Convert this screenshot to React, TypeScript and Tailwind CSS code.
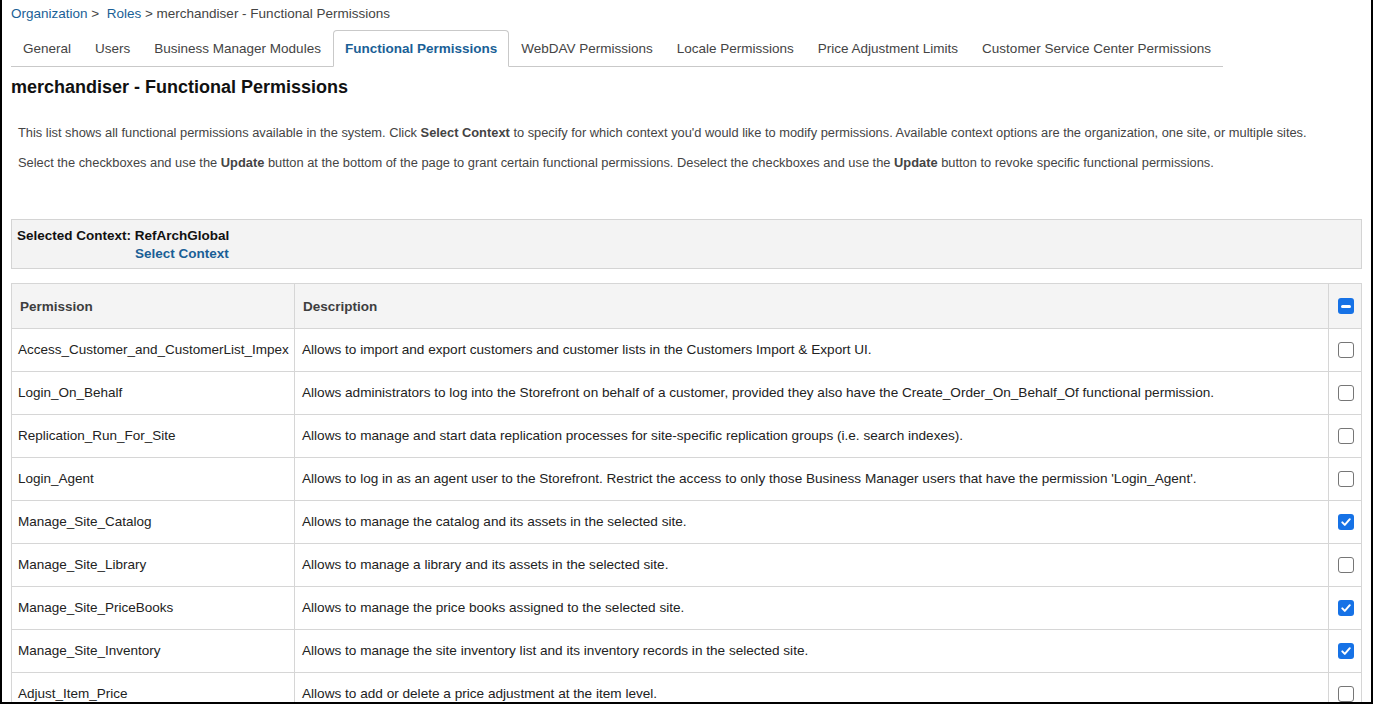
import React from "react";

type Row = { name: string; desc: string; checked: boolean };

const rows: Row[] = [
  { name: "Access_Customer_and_CustomerList_Impex", desc: "Allows to import and export customers and customer lists in the Customers Import & Export UI.", checked: false },
  { name: "Login_On_Behalf", desc: "Allows administrators to log into the Storefront on behalf of a customer, provided they also have the Create_Order_On_Behalf_Of functional permission.", checked: false },
  { name: "Replication_Run_For_Site", desc: "Allows to manage and start data replication processes for site-specific replication groups (i.e. search indexes).", checked: false },
  { name: "Login_Agent", desc: "Allows to log in as an agent user to the Storefront. Restrict the access to only those Business Manager users that have the permission 'Login_Agent'.", checked: false },
  { name: "Manage_Site_Catalog", desc: "Allows to manage the catalog and its assets in the selected site.", checked: true },
  { name: "Manage_Site_Library", desc: "Allows to manage a library and its assets in the selected site.", checked: false },
  { name: "Manage_Site_PriceBooks", desc: "Allows to manage the price books assigned to the selected site.", checked: true },
  { name: "Manage_Site_Inventory", desc: "Allows to manage the site inventory list and its inventory records in the selected site.", checked: true },
  { name: "Adjust_Item_Price", desc: "Allows to add or delete a price adjustment at the item level.", checked: false },
];

const tabs = [
  "General",
  "Users",
  "Business Manager Modules",
  "Functional Permissions",
  "WebDAV Permissions",
  "Locale Permissions",
  "Price Adjustment Limits",
  "Customer Service Center Permissions",
];

function Box({ state }: { state: "on" | "off" | "mixed" }) {
  if (state === "off") {
    return <span className="inline-block w-[16px] h-[16px] rounded-[3px] border border-[#767676] bg-white align-middle" />;
  }
  return (
    <span className="inline-flex w-[16px] h-[16px] rounded-[3px] bg-[#1672e6] items-center justify-center align-middle">
      {state === "on" ? (
        <svg width="12" height="12" viewBox="0 0 12 12" fill="none">
          <path d="M2.3 6.4 4.8 8.9 9.8 3.2" stroke="white" strokeWidth="2" strokeLinecap="round" strokeLinejoin="round" />
        </svg>
      ) : (
        <span className="block w-[10px] h-[2.5px] rounded-full bg-white" />
      )}
    </span>
  );
}

export default function App() {
  return (
    <div className="w-[1373px] h-[704px] overflow-hidden bg-white border-x-2 border-b-2 border-black font-['Liberation_Sans',Arial,sans-serif] text-[13.5px] text-[#222]">
      <div className="pl-[9px] pr-[9px]">
        {/* breadcrumb */}
        <div className="pt-[6px] h-[30px] leading-[16px] text-[#444]">
          <a className="text-[#1a5f96]">Organization</a>
          <span> &gt;&nbsp; </span>
          <a className="text-[#1a5f96]">Roles</a>
          <span> &gt; merchandiser - Functional Permissions</span>
        </div>

        {/* tabs */}
        <div className="inline-flex border-b border-[#c9c9c9]">
          {tabs.map((t) => {
            const active = t === "Functional Permissions";
            return (
              <div
                key={t}
                className={
                  active
                    ? "h-[37px] -mb-px pt-[2px] px-[11px] flex items-center border border-b-white border-[#c9c9c9] rounded-t-[4px] bg-white font-bold text-[#1a5f96]"
                    : "h-[36px] pt-[2px] px-[11px] flex items-center border border-transparent border-b-0 text-[#444]"
                }
              >
                {t}
              </div>
            );
          })}
        </div>

        <h1 className="mt-[10px] text-[18px] leading-[21px] font-bold text-[#111]">
          merchandiser - Functional Permissions
        </h1>

        <div className="mt-[26px] pl-[7px] text-[12.85px] leading-[18px] text-[#444]">
          <p>
            This list shows all functional permissions available in the system. Click <b>Select Context</b> to specify for which context you'd would like to modify permissions. Available context options are the organization, one site, or multiple sites.
          </p>
          <p className="mt-[12px]">
            Select the checkboxes and use the <b>Update</b> button at the bottom of the page to grant certain functional permissions. Deselect the checkboxes and use the <b>Update</b> button to revoke specific functional permissions.
          </p>
        </div>

        {/* context */}
        <div className="mt-[47px] h-[50px] border border-[#d4d4d4] bg-[#f3f3f3] pl-[5px] pt-[7px] text-[13.5px] leading-[18px] font-bold">
          <div className="text-[#111]">Selected Context: RefArchGlobal</div>
          <div className="pl-[118px] text-[#1a5f96]">Select Context</div>
        </div>

        {/* permissions table */}
        <table className="mt-[14px] w-full table-fixed border-collapse border border-[#d6d6d6]">
          <colgroup>
            <col className="w-[283px]" />
            <col />
            <col className="w-[33px]" />
          </colgroup>
          <thead>
            <tr className="h-[45px] bg-[#f4f4f4] text-left text-[#3e3e3e]">
              <th className="px-2 pt-[2px] font-bold border border-[#d6d6d6]">Permission</th>
              <th className="px-2 pt-[2px] font-bold border border-[#d6d6d6]">Description</th>
              <th className="pl-[2px] border border-[#d6d6d6] text-center">
                <Box state="mixed" />
              </th>
            </tr>
          </thead>
          <tbody>
            {rows.map((r) => (
              <tr key={r.name} className="h-[43px]">
                <td className="px-[6px] border border-[#d6d6d6] whitespace-nowrap">{r.name}</td>
                <td className="px-[7px] border border-[#d6d6d6] whitespace-nowrap text-[13.6px]">{r.desc}</td>
                <td className="pl-[2px] border border-[#d6d6d6] text-center">
                  <Box state={r.checked ? "on" : "off"} />
                </td>
              </tr>
            ))}
          </tbody>
        </table>
      </div>
    </div>
  );
}
